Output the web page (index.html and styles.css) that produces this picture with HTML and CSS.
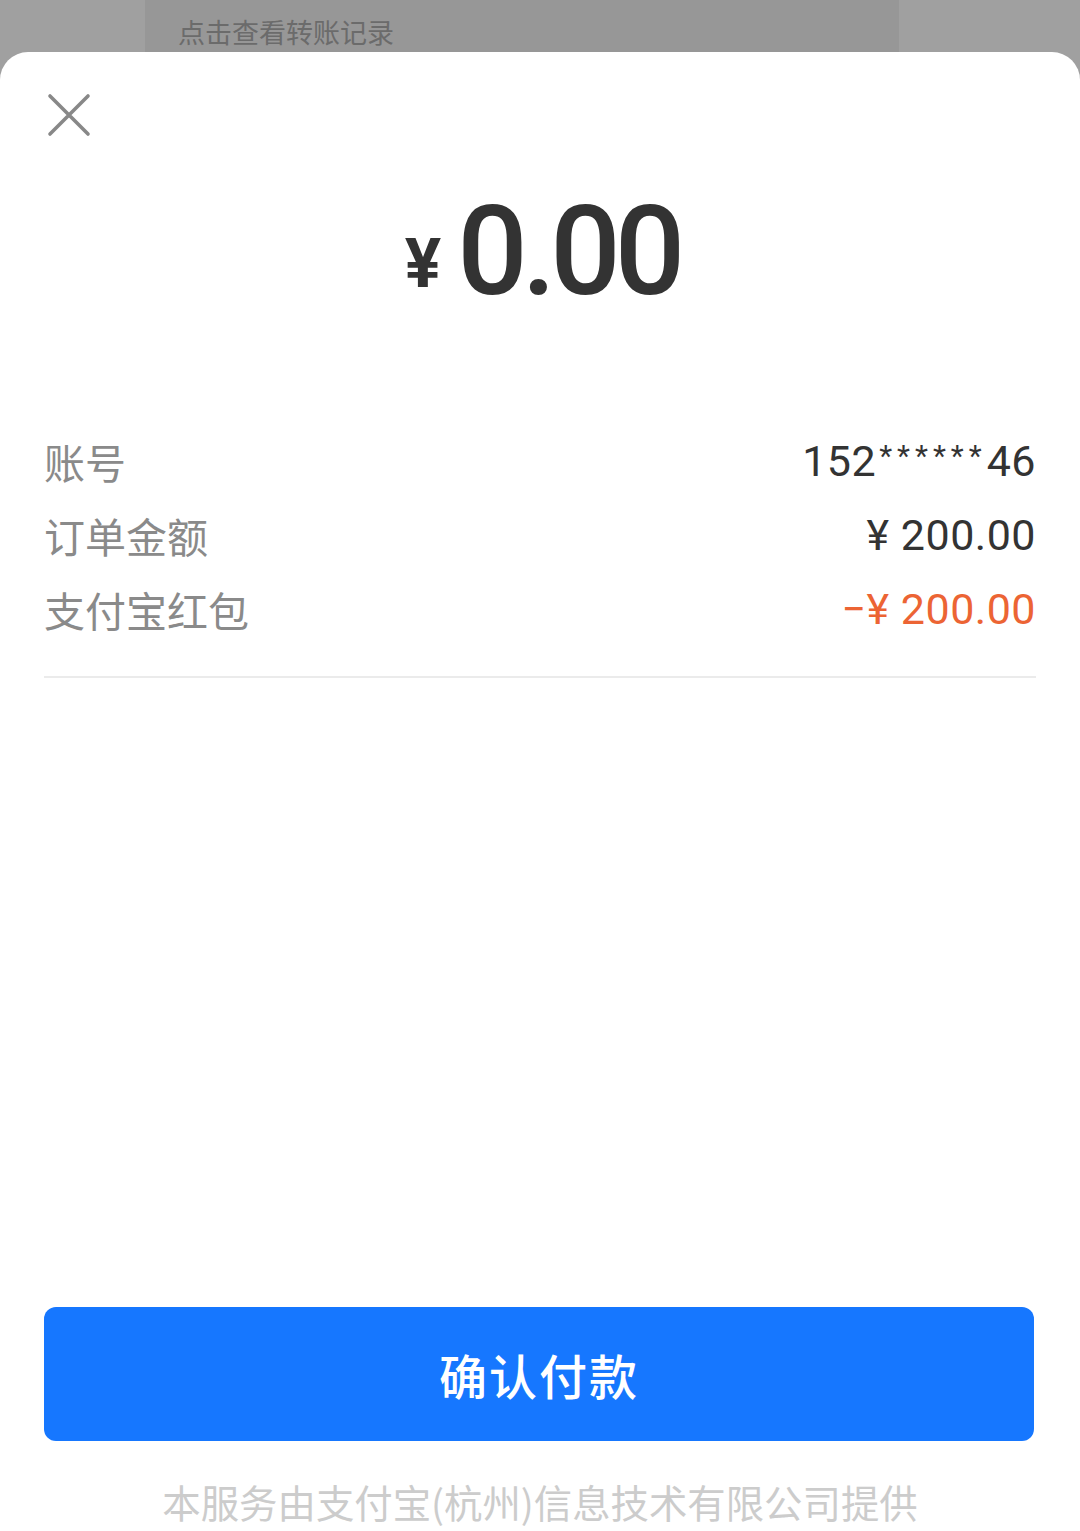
FILE: index.html
```html
<!DOCTYPE html>
<html lang="zh-CN">
<head>
<meta charset="utf-8">
<title>确认付款</title>
<link rel="stylesheet" href="styles.css">
</head>
<body>
<div class="backdrop">
  <div class="under-card">
    <span class="under-text">点击查看转账记录</span>
  </div>
</div>
<div class="sheet">
  <div class="sheet-head">
    <svg class="close" width="44" height="44" viewBox="0 0 44 44" aria-label="关闭">
      <path d="M3 3 L41 41 M41 3 L3 41" stroke="#888" stroke-width="3.6" stroke-linecap="round" fill="none"/>
    </svg>
  </div>
  <div class="amount">
    <span class="amount-sym">¥</span><span class="amount-num">0.00</span>
  </div>
  <div class="details">
    <div class="row">
      <span class="label">账号</span>
      <span class="value">152<span class="stars">******</span>46</span>
    </div>
    <div class="row">
      <span class="label">订单金额</span>
      <span class="value">¥ 200.00</span>
    </div>
    <div class="row">
      <span class="label">支付宝红包</span>
      <span class="value red">−¥ 200.00</span>
    </div>
  </div>
  <div class="spacer"></div>
  <button class="pay-btn">确认付款</button>
  <div class="footer">本服务由支付宝(杭州)信息技术有限公司提供</div>
</div>
</body>
</html>
```

FILE: styles.css
```css
* { box-sizing: border-box; }
html, body {
  margin: 0;
  padding: 0;
  height: 1531px;
  overflow: hidden;
  background: #a0a0a0;
  font-family: "Noto Sans CJK SC", "Noto Sans", Roboto, sans-serif;
}
.backdrop {
  height: 52px;
  padding: 0 181px 0 145px;
}
.under-card {
  height: 52px;
  background: #979797;
  padding-left: 33px;
  padding-top: 14px;
}
.under-text {
  font-size: 27px;
  line-height: 36px;
  color: #6b6b6b;
  display: block;
}
.sheet {
  background: #fff;
  border-radius: 28px 28px 0 0;
  height: 1479px;
  display: flex;
  flex-direction: column;
  padding: 0 44px;
}
.sheet-head {
  height: 130px;
  padding-top: 41px;
  padding-left: 3px;
}
.close { display: block; }
.amount {
  display: flex;
  justify-content: center;
  align-items: baseline;
  color: #333;
  height: 242px;
  padding-left: 4px;
}
.amount-sym {
  font-family: Roboto, "Noto Sans", sans-serif;
  font-weight: 700;
  font-size: 68px;
  margin-right: 16px;
  line-height: 1;
  position: relative;
  top: -7px;
}
.amount-num {
  font-family: Roboto, "Noto Sans", sans-serif;
  font-weight: 500;
  font-size: 124px;
  line-height: 140px;
  letter-spacing: -6px;
}
.details {
  border-bottom: 2px solid #ebebeb;
  padding-bottom: 30px;
}
.row {
  display: flex;
  justify-content: space-between;
  align-items: center;
  height: 74px;
}
.label {
  font-size: 41px;
  color: #8a8a8a;
}
.value {
  font-family: Roboto, "Noto Sans", sans-serif;
  font-size: 43px;
  color: #333;
  letter-spacing: 0.5px;
}
.stars {
  font-size: 30px;
  position: relative;
  top: -10px;
  letter-spacing: 5px;
  margin-left: 3px;
}
.value.red { color: #ec6434; }
.spacer { flex: 1; }
.pay-btn {
  width: 990px;
  height: 134px;
  border: none;
  border-radius: 12px;
  background: #1677ff;
  color: #fff;
  font-family: "Noto Sans CJK SC", sans-serif;
  font-size: 48px;
  font-weight: 500;
  letter-spacing: 2px;
}
.footer {
  text-align: center;
  color: #cccccc;
  font-size: 38.4px;
  height: 90px;
  padding-top: 37px;
  line-height: 46px;
}
```
